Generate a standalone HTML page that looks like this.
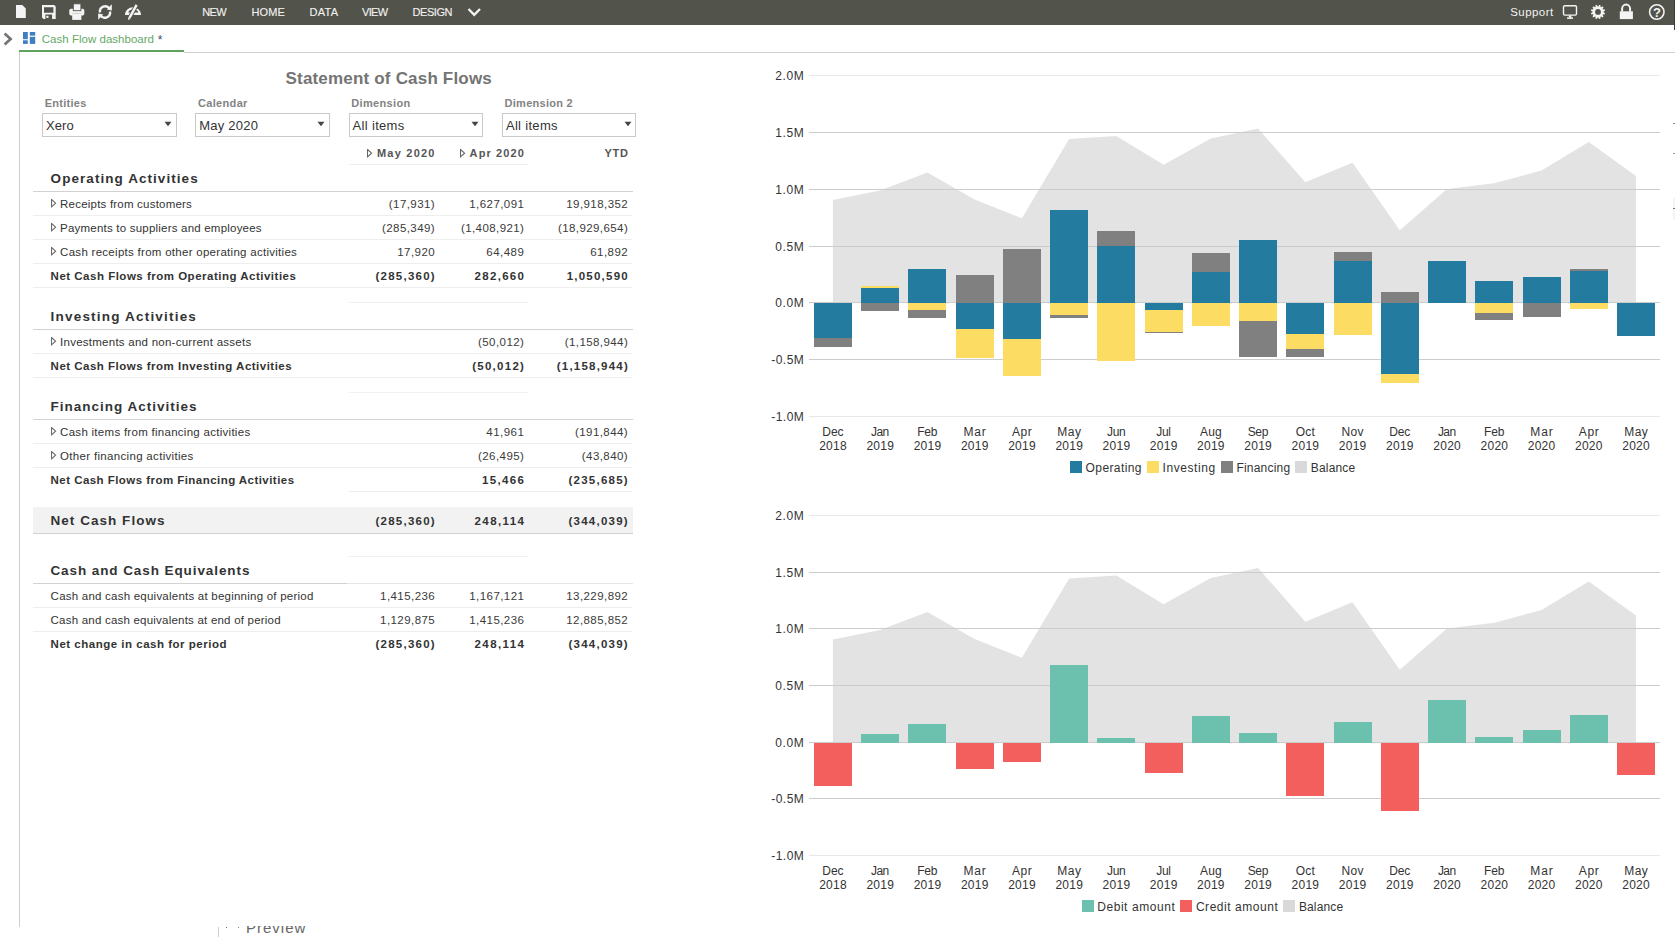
<!DOCTYPE html>
<html><head><meta charset="utf-8"><title>Cash Flow dashboard</title>
<style>
html,body{margin:0;padding:0;background:#fff;}
body{width:1675px;height:937px;overflow:hidden;position:relative;font-family:"Liberation Sans",sans-serif;}
.t{position:absolute;white-space:nowrap;line-height:1;font-family:"Liberation Sans",sans-serif;}
.r{position:absolute;box-sizing:border-box;}
.abs{position:absolute;}
</style></head><body>
<div class="r" style="left:0px;top:0px;width:1675px;height:25px;background:#52534a;"></div>
<svg class="abs" style="left:0;top:0" width="1675" height="25" viewBox="0 0 1675 25">
<path d="M16 5 H22.3 L25.8 8.5 V18 H16 Z" fill="#f4f4f4"/>
<path d="M42 5 H54.2 L55.7 6.5 V19 H43.5 L42 17.5 Z M44 7.2 V12.7 H53.4 V7.2 Z M45.4 14.6 V19 H52.1 V14.6 Z" fill="#f4f4f4" fill-rule="evenodd"/>
<rect x="46.3" y="15.8" width="2.2" height="2.1" fill="#f4f4f4"/>
<path d="M71 8.7 H82.6 Q84.3 8.7 84.3 10.4 V13.8 Q84.3 15.5 82.6 15.5 H71 Q69.3 15.5 69.3 13.8 V10.4 Q69.3 8.7 71 8.7 Z" fill="#f4f4f4"/>
<rect x="73.3" y="3.8" width="7.6" height="6.9" fill="#f4f4f4" stroke="#52534a" stroke-width="0.9"/>
<rect x="72.2" y="13.2" width="9.2" height="6.7" fill="#f4f4f4"/>
<rect x="72.2" y="13.0" width="9.2" height="0.7" fill="#c4c4be"/>
<g fill="none" stroke="#f4f4f4" stroke-width="2.4">
<path d="M100 12.5 A5.3 5.3 0 0 1 109.6 8.6"/>
<path d="M110 11.5 A5.3 5.3 0 0 1 100.4 15.4"/>
</g>
<path d="M106.8 9.6 L111.8 4.2 L111.8 10.6 Z" fill="#f4f4f4"/>
<path d="M103.2 14.4 L98.2 19.8 L98.2 13.4 Z" fill="#f4f4f4"/>
<path d="M124.9 15 A8.1 7.8 0 0 1 141.1 15 Z M128.2 12.6 A5.2 3.9 0 0 1 138.4 12.6 Z" fill="#f4f4f4" fill-rule="evenodd"/>
<path d="M136.8 4.6 L128.6 19.6" stroke="#52534a" stroke-width="4.2"/>
<path d="M136.6 4.9 L129.4 18" stroke="#f4f4f4" stroke-width="2.5"/>
<path d="M127.9 17.6 L130.6 18.9 L128.3 19.9 Z" fill="#f4f4f4"/>
<path d="M468.5 9 L474.2 14.8 L480 9" fill="none" stroke="#f4f4f4" stroke-width="2.3"/>
<rect x="1563.5" y="5.7" width="13" height="9.4" rx="1.3" fill="none" stroke="#f4f4f4" stroke-width="1.4"/>
<rect x="1568.8" y="15.5" width="2.6" height="2.3" fill="#f4f4f4"/>
<rect x="1567" y="17.4" width="6" height="1.5" fill="#f4f4f4"/>
<path d="M1598.34,6.41 L1599.05,4.88 L1600.60,5.29 L1600.45,6.98 L1601.04,7.31 L1602.42,6.34 L1603.56,7.48 L1602.59,8.86 L1602.92,9.45 L1604.61,9.30 L1605.02,10.85 L1603.49,11.56 L1603.49,12.24 L1605.02,12.95 L1604.61,14.50 L1602.92,14.35 L1602.59,14.94 L1603.56,16.32 L1602.42,17.46 L1601.04,16.49 L1600.45,16.82 L1600.60,18.51 L1599.05,18.92 L1598.34,17.39 L1597.66,17.39 L1596.95,18.92 L1595.40,18.51 L1595.55,16.82 L1594.96,16.49 L1593.58,17.46 L1592.44,16.32 L1593.41,14.94 L1593.08,14.35 L1591.39,14.50 L1590.98,12.95 L1592.51,12.24 L1592.51,11.56 L1590.98,10.85 L1591.39,9.30 L1593.08,9.45 L1593.41,8.86 L1592.44,7.48 L1593.58,6.34 L1594.96,7.31 L1595.55,6.98 L1595.40,5.29 L1596.95,4.88 L1597.66,6.41 Z M1600.9,11.9 A2.9,2.9 0 1 0 1595.1,11.9 A2.9,2.9 0 1 0 1600.9,11.9 Z" fill="#f4f4f4" fill-rule="evenodd"/>
<path d="M1622.1 11.5 V8.9 A4 4.3 0 0 1 1630.1 8.9 V11.5" fill="none" stroke="#f4f4f4" stroke-width="2"/>
<rect x="1619.8" y="11.3" width="13.1" height="7.8" fill="#f4f4f4"/>
<circle cx="1656.8" cy="12" r="7.2" fill="none" stroke="#f4f4f4" stroke-width="1.6"/>
</svg>
<div class="r" style="left:1674px;top:0px;width:1px;height:30px;background:#3c3c37;"></div>
<div class="t" style="left:202.20px;top:6.79px;font-size:11px;color:#f2f2f2;letter-spacing:-0.575px;-webkit-text-stroke:0.12px #f2f2f2;">NEW</div>
<div class="t" style="left:251.40px;top:6.79px;font-size:11px;color:#f2f2f2;letter-spacing:0.167px;-webkit-text-stroke:0.12px #f2f2f2;">HOME</div>
<div class="t" style="left:309.50px;top:6.79px;font-size:11px;color:#f2f2f2;letter-spacing:0.267px;-webkit-text-stroke:0.12px #f2f2f2;">DATA</div>
<div class="t" style="left:362.00px;top:6.79px;font-size:11px;color:#f2f2f2;letter-spacing:-0.700px;-webkit-text-stroke:0.12px #f2f2f2;">VIEW</div>
<div class="t" style="left:412.60px;top:6.79px;font-size:11px;color:#f2f2f2;letter-spacing:-0.470px;-webkit-text-stroke:0.12px #f2f2f2;">DESIGN</div>
<div class="t" style="left:1510.20px;top:7.47px;font-size:11.5px;color:#f2f2f2;letter-spacing:0.450px;">Support</div>
<div class="t" style="left:1652.93px;top:6.00px;font-size:13px;font-weight:bold;color:#f4f4f4;letter-spacing:0.000px;">?</div>
<svg class="abs" style="left:0;top:25px" width="200" height="30" viewBox="0 25 200 30">
<path d="M4.6 33.6 L10.6 39 L4.6 44.4" fill="none" stroke="#737373" stroke-width="2.7"/>
<g fill="#3f7ec2">
<rect x="23" y="32" width="4.8" height="7.2"/>
<rect x="23" y="40.3" width="4.8" height="3.6"/>
<rect x="29.8" y="32" width="5.4" height="3.6"/>
<rect x="29.8" y="36.8" width="5.4" height="7.1"/>
</g>
</svg>
<div class="t" style="left:41.80px;top:33.57px;font-size:11.5px;color:#66a866;letter-spacing:0.019px;">Cash Flow dashboard</div>
<div class="t" style="left:157.80px;top:33.74px;font-size:12px;color:#3a4a6a;letter-spacing:0.000px;">*</div>
<div class="r" style="left:19px;top:50px;width:165px;height:2px;background:#5ea35e;"></div>
<div class="r" style="left:184px;top:52px;width:1491px;height:1px;background:#cfcfcf;"></div>
<div class="r" style="left:19px;top:52px;width:1px;height:875px;background:#cdcdcd;"></div>
<div class="t" style="left:285.50px;top:70.21px;font-size:17px;font-weight:bold;color:#747474;letter-spacing:0.189px;">Statement of Cash Flows</div>
<div class="t" style="left:44.70px;top:97.59px;font-size:11px;font-weight:bold;color:#838383;letter-spacing:0.264px;">Entities</div>
<div class="r" style="left:42.0px;top:113px;width:134.5px;height:23.5px;border:1px solid #c9c9c9;background:#fff"></div>
<div class="t" style="left:46.00px;top:118.90px;font-size:13px;color:#333;letter-spacing:0.083px;">Xero</div>
<svg class="abs" style="left:163.9px;top:121px" width="8" height="6"><path d="M0.5 0.8 H7.5 L4 5.3 Z" fill="#444"/></svg>
<div class="t" style="left:198.00px;top:97.59px;font-size:11px;font-weight:bold;color:#838383;letter-spacing:0.329px;">Calendar</div>
<div class="r" style="left:195.3px;top:113px;width:134.5px;height:23.5px;border:1px solid #c9c9c9;background:#fff"></div>
<div class="t" style="left:199.30px;top:118.90px;font-size:13px;color:#333;letter-spacing:0.221px;">May 2020</div>
<svg class="abs" style="left:317.2px;top:121px" width="8" height="6"><path d="M0.5 0.8 H7.5 L4 5.3 Z" fill="#444"/></svg>
<div class="t" style="left:351.30px;top:97.59px;font-size:11px;font-weight:bold;color:#838383;letter-spacing:0.331px;">Dimension</div>
<div class="r" style="left:348.6px;top:113px;width:134.5px;height:23.5px;border:1px solid #c9c9c9;background:#fff"></div>
<div class="t" style="left:352.60px;top:118.90px;font-size:13px;color:#333;letter-spacing:0.319px;">All items</div>
<svg class="abs" style="left:470.5px;top:121px" width="8" height="6"><path d="M0.5 0.8 H7.5 L4 5.3 Z" fill="#444"/></svg>
<div class="t" style="left:504.60px;top:97.59px;font-size:11px;font-weight:bold;color:#838383;letter-spacing:0.265px;">Dimension 2</div>
<div class="r" style="left:501.9px;top:113px;width:134.5px;height:23.5px;border:1px solid #c9c9c9;background:#fff"></div>
<div class="t" style="left:505.90px;top:118.90px;font-size:13px;color:#333;letter-spacing:0.319px;">All items</div>
<svg class="abs" style="left:623.8px;top:121px" width="8" height="6"><path d="M0.5 0.8 H7.5 L4 5.3 Z" fill="#444"/></svg>
<svg class="abs" style="left:367.2px;top:148.6px" width="6" height="10"><path d="M0.5 0.5 L4.6 4.2 L0.5 7.9 Z" fill="none" stroke="#666" stroke-width="1.1"/></svg>
<div class="t" style="left:376.90px;top:148.19px;font-size:11px;font-weight:bold;color:#555;letter-spacing:1.236px;">May 2020</div>
<svg class="abs" style="left:459.7px;top:148.6px" width="6" height="10"><path d="M0.5 0.5 L4.6 4.2 L0.5 7.9 Z" fill="none" stroke="#666" stroke-width="1.1"/></svg>
<div class="t" style="left:469.60px;top:148.19px;font-size:11px;font-weight:bold;color:#555;letter-spacing:1.107px;">Apr 2020</div>
<div class="t" style="left:604.50px;top:148.19px;font-size:11px;font-weight:bold;color:#555;letter-spacing:0.700px;">YTD</div>
<div class="r" style="left:349px;top:164px;width:179px;height:1px;background:#efefef;"></div>
<div class="t" style="left:50.60px;top:172.37px;font-size:13.5px;font-weight:bold;color:#333;letter-spacing:1.055px;">Operating Activities</div>
<div class="r" style="left:33px;top:191px;width:600px;height:1px;background:#d2d2d2;"></div>
<svg class="abs" style="left:51.2px;top:199.2px" width="6" height="10"><path d="M0.5 0.5 L4.6 4.2 L0.5 7.9 Z" fill="none" stroke="#6a6a6a" stroke-width="1.1"/></svg>
<div class="t" style="left:60.10px;top:199.27px;font-size:11.5px;color:#333;letter-spacing:0.207px;">Receipts from customers</div>
<div class="t" style="left:388.83px;top:199.27px;font-size:11.5px;color:#3a3a3a;letter-spacing:0.432px;">(17,931)</div>
<div class="t" style="left:469.30px;top:199.27px;font-size:11.5px;color:#3a3a3a;letter-spacing:0.431px;">1,627,091</div>
<div class="t" style="left:566.28px;top:199.27px;font-size:11.5px;color:#3a3a3a;letter-spacing:0.431px;">19,918,352</div>
<div class="r" style="left:33px;top:215px;width:599px;height:1px;background:#eeeeee;"></div>
<svg class="abs" style="left:51.2px;top:223.2px" width="6" height="10"><path d="M0.5 0.5 L4.6 4.2 L0.5 7.9 Z" fill="none" stroke="#6a6a6a" stroke-width="1.1"/></svg>
<div class="t" style="left:60.10px;top:223.27px;font-size:11.5px;color:#333;letter-spacing:0.210px;">Payments to suppliers and employees</div>
<div class="t" style="left:382.00px;top:223.27px;font-size:11.5px;color:#3a3a3a;letter-spacing:0.431px;">(285,349)</div>
<div class="t" style="left:460.96px;top:223.27px;font-size:11.5px;color:#3a3a3a;letter-spacing:0.414px;">(1,408,921)</div>
<div class="t" style="left:557.94px;top:223.27px;font-size:11.5px;color:#3a3a3a;letter-spacing:0.415px;">(18,929,654)</div>
<div class="r" style="left:33px;top:239px;width:599px;height:1px;background:#eeeeee;"></div>
<svg class="abs" style="left:51.2px;top:247.2px" width="6" height="10"><path d="M0.5 0.5 L4.6 4.2 L0.5 7.9 Z" fill="none" stroke="#6a6a6a" stroke-width="1.1"/></svg>
<div class="t" style="left:60.10px;top:247.27px;font-size:11.5px;color:#333;letter-spacing:0.282px;">Cash receipts from other operating activities</div>
<div class="t" style="left:397.16px;top:247.27px;font-size:11.5px;color:#3a3a3a;letter-spacing:0.467px;">17,920</div>
<div class="t" style="left:486.36px;top:247.27px;font-size:11.5px;color:#3a3a3a;letter-spacing:0.467px;">64,489</div>
<div class="t" style="left:590.16px;top:247.27px;font-size:11.5px;color:#3a3a3a;letter-spacing:0.467px;">61,892</div>
<div class="r" style="left:33px;top:263px;width:599px;height:1px;background:#eeeeee;"></div>
<div class="t" style="left:50.60px;top:271.27px;font-size:11.5px;font-weight:bold;color:#333;letter-spacing:0.500px;">Net Cash Flows from Operating Activities</div>
<div class="t" style="left:375.45px;top:271.27px;font-size:11.5px;font-weight:bold;color:#333;letter-spacing:1.250px;">(285,360)</div>
<div class="t" style="left:474.55px;top:271.27px;font-size:11.5px;font-weight:bold;color:#333;letter-spacing:1.300px;">282,660</div>
<div class="t" style="left:566.68px;top:271.27px;font-size:11.5px;font-weight:bold;color:#333;letter-spacing:1.234px;">1,050,590</div>
<div class="r" style="left:33px;top:287px;width:599px;height:1px;background:#eeeeee;"></div>
<div class="r" style="left:349px;top:302px;width:179px;height:1px;background:#f1f1f1;"></div>
<div class="t" style="left:50.60px;top:310.47px;font-size:13.5px;font-weight:bold;color:#333;letter-spacing:1.197px;">Investing Activities</div>
<div class="r" style="left:33px;top:329px;width:600px;height:1px;background:#d2d2d2;"></div>
<svg class="abs" style="left:51.2px;top:337.2px" width="6" height="10"><path d="M0.5 0.5 L4.6 4.2 L0.5 7.9 Z" fill="none" stroke="#6a6a6a" stroke-width="1.1"/></svg>
<div class="t" style="left:60.10px;top:337.27px;font-size:11.5px;color:#333;letter-spacing:0.249px;">Investments and non-current assets</div>
<div class="t" style="left:478.03px;top:337.27px;font-size:11.5px;color:#3a3a3a;letter-spacing:0.432px;">(50,012)</div>
<div class="t" style="left:564.76px;top:337.27px;font-size:11.5px;color:#3a3a3a;letter-spacing:0.414px;">(1,158,944)</div>
<div class="r" style="left:33px;top:353px;width:599px;height:1px;background:#eeeeee;"></div>
<div class="t" style="left:50.60px;top:361.27px;font-size:11.5px;font-weight:bold;color:#333;letter-spacing:0.489px;">Net Cash Flows from Investing Activities</div>
<div class="t" style="left:472.19px;top:361.27px;font-size:11.5px;font-weight:bold;color:#333;letter-spacing:1.266px;">(50,012)</div>
<div class="t" style="left:556.78px;top:361.27px;font-size:11.5px;font-weight:bold;color:#333;letter-spacing:1.212px;">(1,158,944)</div>
<div class="r" style="left:33px;top:377px;width:599px;height:1px;background:#eeeeee;"></div>
<div class="r" style="left:349px;top:392px;width:179px;height:1px;background:#f1f1f1;"></div>
<div class="t" style="left:50.60px;top:400.47px;font-size:13.5px;font-weight:bold;color:#333;letter-spacing:1.000px;">Financing Activities</div>
<div class="r" style="left:33px;top:419px;width:600px;height:1px;background:#d2d2d2;"></div>
<svg class="abs" style="left:51.2px;top:427.2px" width="6" height="10"><path d="M0.5 0.5 L4.6 4.2 L0.5 7.9 Z" fill="none" stroke="#6a6a6a" stroke-width="1.1"/></svg>
<div class="t" style="left:60.10px;top:427.27px;font-size:11.5px;color:#333;letter-spacing:0.280px;">Cash items from financing activities</div>
<div class="t" style="left:486.36px;top:427.27px;font-size:11.5px;color:#3a3a3a;letter-spacing:0.467px;">41,961</div>
<div class="t" style="left:575.00px;top:427.27px;font-size:11.5px;color:#3a3a3a;letter-spacing:0.431px;">(191,844)</div>
<div class="r" style="left:33px;top:443px;width:599px;height:1px;background:#eeeeee;"></div>
<svg class="abs" style="left:51.2px;top:451.2px" width="6" height="10"><path d="M0.5 0.5 L4.6 4.2 L0.5 7.9 Z" fill="none" stroke="#6a6a6a" stroke-width="1.1"/></svg>
<div class="t" style="left:60.10px;top:451.27px;font-size:11.5px;color:#333;letter-spacing:0.317px;">Other financing activities</div>
<div class="t" style="left:478.03px;top:451.27px;font-size:11.5px;color:#3a3a3a;letter-spacing:0.432px;">(26,495)</div>
<div class="t" style="left:581.83px;top:451.27px;font-size:11.5px;color:#3a3a3a;letter-spacing:0.432px;">(43,840)</div>
<div class="r" style="left:33px;top:467px;width:599px;height:1px;background:#eeeeee;"></div>
<div class="t" style="left:50.60px;top:475.27px;font-size:11.5px;font-weight:bold;color:#333;letter-spacing:0.453px;">Net Cash Flows from Financing Activities</div>
<div class="t" style="left:482.09px;top:475.27px;font-size:11.5px;font-weight:bold;color:#333;letter-spacing:1.323px;">15,466</div>
<div class="t" style="left:568.45px;top:475.27px;font-size:11.5px;font-weight:bold;color:#333;letter-spacing:1.250px;">(235,685)</div>
<div class="r" style="left:349px;top:491px;width:283px;height:1px;background:#eeeeee;"></div>
<div class="r" style="left:33px;top:507px;width:600px;height:26px;background:#f2f2f2;"></div>
<div class="r" style="left:33px;top:533px;width:600px;height:1px;background:#d0d0d0;"></div>
<div class="t" style="left:50.50px;top:514.37px;font-size:13.5px;font-weight:bold;color:#333;letter-spacing:1.038px;">Net Cash Flows</div>
<div class="t" style="left:375.45px;top:516.07px;font-size:11.5px;font-weight:bold;color:#333;letter-spacing:1.250px;">(285,360)</div>
<div class="t" style="left:474.55px;top:516.07px;font-size:11.5px;font-weight:bold;color:#333;letter-spacing:1.400px;">248,114</div>
<div class="t" style="left:568.45px;top:516.07px;font-size:11.5px;font-weight:bold;color:#333;letter-spacing:1.250px;">(344,039)</div>
<div class="r" style="left:349px;top:556px;width:179px;height:1px;background:#f1f1f1;"></div>
<div class="t" style="left:50.40px;top:564.27px;font-size:13.5px;font-weight:bold;color:#333;letter-spacing:0.915px;">Cash and Cash Equivalents</div>
<div class="r" style="left:33px;top:583px;width:314px;height:1px;background:#d2d2d2;"></div>
<div class="r" style="left:347px;top:583px;width:286px;height:1px;background:#e6e6e6;"></div>
<div class="t" style="left:50.60px;top:591.07px;font-size:11.5px;color:#333;letter-spacing:0.230px;">Cash and cash equivalents at beginning of period</div>
<div class="t" style="left:380.10px;top:591.07px;font-size:11.5px;color:#3a3a3a;letter-spacing:0.431px;">1,415,236</div>
<div class="t" style="left:469.30px;top:591.07px;font-size:11.5px;color:#3a3a3a;letter-spacing:0.431px;">1,167,121</div>
<div class="t" style="left:566.28px;top:591.07px;font-size:11.5px;color:#3a3a3a;letter-spacing:0.431px;">13,229,892</div>
<div class="r" style="left:33px;top:607px;width:599px;height:1px;background:#eeeeee;"></div>
<div class="t" style="left:50.60px;top:615.07px;font-size:11.5px;color:#333;letter-spacing:0.215px;">Cash and cash equivalents at end of period</div>
<div class="t" style="left:380.10px;top:615.07px;font-size:11.5px;color:#3a3a3a;letter-spacing:0.431px;">1,129,875</div>
<div class="t" style="left:469.30px;top:615.07px;font-size:11.5px;color:#3a3a3a;letter-spacing:0.431px;">1,415,236</div>
<div class="t" style="left:566.28px;top:615.07px;font-size:11.5px;color:#3a3a3a;letter-spacing:0.431px;">12,885,852</div>
<div class="r" style="left:33px;top:631px;width:599px;height:1px;background:#eeeeee;"></div>
<div class="t" style="left:50.60px;top:639.17px;font-size:11.5px;font-weight:bold;color:#333;letter-spacing:0.508px;">Net change in cash for period</div>
<div class="t" style="left:375.45px;top:639.17px;font-size:11.5px;font-weight:bold;color:#333;letter-spacing:1.250px;">(285,360)</div>
<div class="t" style="left:474.55px;top:639.17px;font-size:11.5px;font-weight:bold;color:#333;letter-spacing:1.400px;">248,114</div>
<div class="t" style="left:568.45px;top:639.17px;font-size:11.5px;font-weight:bold;color:#333;letter-spacing:1.250px;">(344,039)</div>
<div class="r" style="left:1673px;top:123px;width:2px;height:1px;background:#888;"></div>
<div class="r" style="left:1673px;top:153px;width:2px;height:1px;background:#999;"></div>
<div class="r" style="left:1673px;top:198px;width:2px;height:22px;background:#f4f4f4;"></div>
<div class="r" style="left:1673px;top:208px;width:2px;height:1px;background:#777;"></div>
<div class="abs" style="left:218px;top:927px;width:1px;height:10px;background:#cfcfcf"></div>
<div class="r" style="left:226px;top:927px;width:1px;height:1px;background:#666;"></div>
<div class="r" style="left:238px;top:927px;width:1px;height:1px;background:#888;"></div>
<div class="abs" style="left:240px;top:926px;width:80px;height:11px;overflow:hidden"><div style="position:absolute;left:6px;top:-6px;font:15px/1 'Liberation Sans';color:#666;letter-spacing:1.0px;white-space:nowrap">Preview</div></div>
<svg class="abs" style="left:0;top:0" width="1675" height="937" viewBox="0 0 1675 937" shape-rendering="crispEdges">
<polygon points="832.9,302.6 832.9,200.1 880.1,190.6 927.4,172.5 974.6,199.6 1021.9,218.2 1069.1,139.1 1116.3,135.9 1163.6,164.8 1210.8,138.4 1258.1,128.6 1305.3,182.2 1352.5,162.8 1399.8,230.2 1447.0,188.9 1494.3,183.3 1541.5,170.5 1588.7,141.9 1636.0,175.9 1636.0,302.6" fill="#e3e3e3" shape-rendering="geometricPrecision"/>
<rect x="809" y="75" width="851" height="1" fill="#e8e8e8"/>
<rect x="809" y="132" width="851" height="1" fill="#cccccc"/>
<rect x="809" y="189" width="851" height="1" fill="#cccccc"/>
<rect x="809" y="246" width="851" height="1" fill="#cccccc"/>
<rect x="809" y="302" width="851" height="1" fill="#cccccc"/>
<rect x="809" y="359" width="851" height="1" fill="#cccccc"/>
<rect x="809" y="416" width="851" height="1" fill="#e8e8e8"/>
<rect x="813.9" y="302.6" width="38.0" height="35.1" fill="#237b9f"/>
<rect x="813.9" y="337.7" width="38.0" height="8.9" fill="#808080"/>
<rect x="861.1" y="287.7" width="38.0" height="14.9" fill="#237b9f"/>
<rect x="861.1" y="286.4" width="38.0" height="1.3" fill="#fddc64"/>
<rect x="861.1" y="302.6" width="38.0" height="8.2" fill="#808080"/>
<rect x="908.4" y="268.7" width="38.0" height="33.9" fill="#237b9f"/>
<rect x="908.4" y="302.6" width="38.0" height="7.4" fill="#fddc64"/>
<rect x="908.4" y="310.0" width="38.0" height="7.6" fill="#808080"/>
<rect x="955.6" y="274.9" width="38.0" height="27.7" fill="#808080"/>
<rect x="955.6" y="302.6" width="38.0" height="26.3" fill="#237b9f"/>
<rect x="955.6" y="328.9" width="38.0" height="29.1" fill="#fddc64"/>
<rect x="1002.9" y="249.1" width="38.0" height="53.5" fill="#808080"/>
<rect x="1002.9" y="302.6" width="38.0" height="36.2" fill="#237b9f"/>
<rect x="1002.9" y="338.8" width="38.0" height="36.9" fill="#fddc64"/>
<rect x="1050.1" y="209.9" width="38.0" height="92.7" fill="#237b9f"/>
<rect x="1050.1" y="302.6" width="38.0" height="12.3" fill="#fddc64"/>
<rect x="1050.1" y="314.9" width="38.0" height="2.7" fill="#808080"/>
<rect x="1097.3" y="231.0" width="38.0" height="15.1" fill="#808080"/>
<rect x="1097.3" y="246.1" width="38.0" height="56.5" fill="#237b9f"/>
<rect x="1097.3" y="302.6" width="38.0" height="58.2" fill="#fddc64"/>
<rect x="1144.6" y="302.6" width="38.0" height="7.4" fill="#237b9f"/>
<rect x="1144.6" y="310.0" width="38.0" height="21.9" fill="#fddc64"/>
<rect x="1144.6" y="331.9" width="38.0" height="0.7" fill="#808080"/>
<rect x="1191.8" y="253.0" width="38.0" height="18.8" fill="#808080"/>
<rect x="1191.8" y="271.8" width="38.0" height="30.8" fill="#237b9f"/>
<rect x="1191.8" y="302.6" width="38.0" height="22.9" fill="#fddc64"/>
<rect x="1239.1" y="240.0" width="38.0" height="62.6" fill="#237b9f"/>
<rect x="1239.1" y="302.6" width="38.0" height="18.2" fill="#fddc64"/>
<rect x="1239.1" y="320.8" width="38.0" height="35.7" fill="#808080"/>
<rect x="1286.3" y="302.6" width="38.0" height="31.0" fill="#237b9f"/>
<rect x="1286.3" y="333.6" width="38.0" height="15.4" fill="#fddc64"/>
<rect x="1286.3" y="349.0" width="38.0" height="7.7" fill="#808080"/>
<rect x="1333.5" y="251.9" width="38.0" height="9.2" fill="#808080"/>
<rect x="1333.5" y="261.1" width="38.0" height="41.5" fill="#237b9f"/>
<rect x="1333.5" y="302.6" width="38.0" height="32.1" fill="#fddc64"/>
<rect x="1380.8" y="292.0" width="38.0" height="10.6" fill="#808080"/>
<rect x="1380.8" y="302.6" width="38.0" height="71.4" fill="#237b9f"/>
<rect x="1380.8" y="374.0" width="38.0" height="8.7" fill="#fddc64"/>
<rect x="1428.0" y="260.9" width="38.0" height="41.7" fill="#237b9f"/>
<rect x="1475.3" y="280.9" width="38.0" height="21.7" fill="#237b9f"/>
<rect x="1475.3" y="302.6" width="38.0" height="10.6" fill="#fddc64"/>
<rect x="1475.3" y="313.2" width="38.0" height="6.4" fill="#808080"/>
<rect x="1522.5" y="276.9" width="38.0" height="25.7" fill="#237b9f"/>
<rect x="1522.5" y="302.6" width="38.0" height="14.2" fill="#808080"/>
<rect x="1569.7" y="269.2" width="38.0" height="1.8" fill="#808080"/>
<rect x="1569.7" y="271.0" width="38.0" height="31.6" fill="#237b9f"/>
<rect x="1569.7" y="302.6" width="38.0" height="6.2" fill="#fddc64"/>
<rect x="1617.0" y="302.6" width="38.0" height="33.1" fill="#237b9f"/>
<polygon points="832.9,742.1 832.9,639.6 880.1,630.1 927.4,612.0 974.6,639.1 1021.9,657.7 1069.1,578.6 1116.3,575.4 1163.6,604.3 1210.8,577.9 1258.1,568.1 1305.3,621.7 1352.5,602.3 1399.8,669.7 1447.0,628.4 1494.3,622.8 1541.5,610.0 1588.7,581.4 1636.0,615.4 1636.0,742.1" fill="#e3e3e3" shape-rendering="geometricPrecision"/>
<rect x="809" y="515" width="851" height="1" fill="#e8e8e8"/>
<rect x="809" y="572" width="851" height="1" fill="#cccccc"/>
<rect x="809" y="628" width="851" height="1" fill="#cccccc"/>
<rect x="809" y="685" width="851" height="1" fill="#cccccc"/>
<rect x="809" y="742" width="851" height="1" fill="#cccccc"/>
<rect x="809" y="798" width="851" height="1" fill="#cccccc"/>
<rect x="809" y="855" width="851" height="1" fill="#e8e8e8"/>
<rect x="813.9" y="742.6" width="38.0" height="43.1" fill="#f25f5c"/>
<rect x="861.1" y="734.0" width="38.0" height="8.6" fill="#6cc0ae"/>
<rect x="908.4" y="724.0" width="38.0" height="18.6" fill="#6cc0ae"/>
<rect x="955.6" y="742.6" width="38.0" height="26.2" fill="#f25f5c"/>
<rect x="1002.9" y="742.6" width="38.0" height="19.2" fill="#f25f5c"/>
<rect x="1050.1" y="664.8" width="38.0" height="77.8" fill="#6cc0ae"/>
<rect x="1097.3" y="737.8" width="38.0" height="4.8" fill="#6cc0ae"/>
<rect x="1144.6" y="742.6" width="38.0" height="30.0" fill="#f25f5c"/>
<rect x="1191.8" y="715.9" width="38.0" height="26.7" fill="#6cc0ae"/>
<rect x="1239.1" y="733.0" width="38.0" height="9.6" fill="#6cc0ae"/>
<rect x="1286.3" y="742.6" width="38.0" height="53.1" fill="#f25f5c"/>
<rect x="1333.5" y="722.0" width="38.0" height="20.6" fill="#6cc0ae"/>
<rect x="1380.8" y="742.6" width="38.0" height="68.0" fill="#f25f5c"/>
<rect x="1428.0" y="700.0" width="38.0" height="42.6" fill="#6cc0ae"/>
<rect x="1475.3" y="737.0" width="38.0" height="5.6" fill="#6cc0ae"/>
<rect x="1522.5" y="729.9" width="38.0" height="12.7" fill="#6cc0ae"/>
<rect x="1569.7" y="714.9" width="38.0" height="27.7" fill="#6cc0ae"/>
<rect x="1617.0" y="742.6" width="38.0" height="31.9" fill="#f25f5c"/>
<rect x="1070" y="461" width="12" height="12" fill="#237b9f"/>
<rect x="1147" y="461" width="12" height="12" fill="#fddc64"/>
<rect x="1221" y="461" width="12" height="12" fill="#808080"/>
<rect x="1295" y="461" width="12" height="12" fill="#d9d9d9"/>
<rect x="1082" y="900" width="12" height="12" fill="#6cc0ae"/>
<rect x="1180" y="900" width="12" height="12" fill="#f25f5c"/>
<rect x="1283" y="900" width="12" height="12" fill="#d9d9d9"/>
</svg>
<div class="t" style="left:775.22px;top:69.74px;font-size:12px;color:#333;letter-spacing:0.628px;">2.0M</div>
<div class="t" style="left:775.22px;top:126.74px;font-size:12px;color:#333;letter-spacing:0.628px;">1.5M</div>
<div class="t" style="left:775.22px;top:183.74px;font-size:12px;color:#333;letter-spacing:0.628px;">1.0M</div>
<div class="t" style="left:775.22px;top:240.74px;font-size:12px;color:#333;letter-spacing:0.628px;">0.5M</div>
<div class="t" style="left:775.22px;top:296.74px;font-size:12px;color:#333;letter-spacing:0.628px;">0.0M</div>
<div class="t" style="left:771.25px;top:354.34px;font-size:12px;color:#333;letter-spacing:0.462px;">-0.5M</div>
<div class="t" style="left:771.25px;top:411.34px;font-size:12px;color:#333;letter-spacing:0.462px;">-1.0M</div>
<div class="t" style="left:822.30px;top:425.64px;font-size:12px;color:#333;letter-spacing:-0.075px;">Dec</div>
<div class="t" style="left:819.17px;top:439.64px;font-size:12px;color:#333;letter-spacing:0.250px;">2018</div>
<div class="t" style="left:871.04px;top:425.64px;font-size:12px;color:#333;letter-spacing:-0.575px;">Jan</div>
<div class="t" style="left:866.41px;top:439.64px;font-size:12px;color:#333;letter-spacing:0.250px;">2019</div>
<div class="t" style="left:917.23px;top:425.64px;font-size:12px;color:#333;letter-spacing:-0.200px;">Feb</div>
<div class="t" style="left:913.65px;top:439.64px;font-size:12px;color:#333;letter-spacing:0.250px;">2019</div>
<div class="t" style="left:963.42px;top:425.64px;font-size:12px;color:#333;letter-spacing:0.875px;">Mar</div>
<div class="t" style="left:960.89px;top:439.64px;font-size:12px;color:#333;letter-spacing:0.250px;">2019</div>
<div class="t" style="left:1011.94px;top:425.64px;font-size:12px;color:#333;letter-spacing:0.600px;">Apr</div>
<div class="t" style="left:1008.13px;top:439.64px;font-size:12px;color:#333;letter-spacing:0.250px;">2019</div>
<div class="t" style="left:1057.32px;top:425.64px;font-size:12px;color:#333;letter-spacing:0.450px;">May</div>
<div class="t" style="left:1055.38px;top:439.64px;font-size:12px;color:#333;letter-spacing:0.250px;">2019</div>
<div class="t" style="left:1106.89px;top:425.64px;font-size:12px;color:#333;letter-spacing:-0.225px;">Jun</div>
<div class="t" style="left:1102.62px;top:439.64px;font-size:12px;color:#333;letter-spacing:0.250px;">2019</div>
<div class="t" style="left:1156.30px;top:425.64px;font-size:12px;color:#333;letter-spacing:-0.400px;">Jul</div>
<div class="t" style="left:1149.86px;top:439.64px;font-size:12px;color:#333;letter-spacing:0.250px;">2019</div>
<div class="t" style="left:1200.04px;top:425.64px;font-size:12px;color:#333;letter-spacing:0.100px;">Aug</div>
<div class="t" style="left:1197.10px;top:439.64px;font-size:12px;color:#333;letter-spacing:0.250px;">2019</div>
<div class="t" style="left:1247.73px;top:425.64px;font-size:12px;color:#333;letter-spacing:-0.350px;">Sep</div>
<div class="t" style="left:1244.34px;top:439.64px;font-size:12px;color:#333;letter-spacing:0.250px;">2019</div>
<div class="t" style="left:1295.65px;top:425.64px;font-size:12px;color:#333;letter-spacing:0.325px;">Oct</div>
<div class="t" style="left:1291.58px;top:439.64px;font-size:12px;color:#333;letter-spacing:0.250px;">2019</div>
<div class="t" style="left:1341.49px;top:425.64px;font-size:12px;color:#333;letter-spacing:0.375px;">Nov</div>
<div class="t" style="left:1338.82px;top:439.64px;font-size:12px;color:#333;letter-spacing:0.250px;">2019</div>
<div class="t" style="left:1389.18px;top:425.64px;font-size:12px;color:#333;letter-spacing:-0.075px;">Dec</div>
<div class="t" style="left:1386.06px;top:439.64px;font-size:12px;color:#333;letter-spacing:0.250px;">2019</div>
<div class="t" style="left:1437.92px;top:425.64px;font-size:12px;color:#333;letter-spacing:-0.575px;">Jan</div>
<div class="t" style="left:1433.30px;top:439.64px;font-size:12px;color:#333;letter-spacing:0.250px;">2020</div>
<div class="t" style="left:1484.11px;top:425.64px;font-size:12px;color:#333;letter-spacing:-0.200px;">Feb</div>
<div class="t" style="left:1480.54px;top:439.64px;font-size:12px;color:#333;letter-spacing:0.250px;">2020</div>
<div class="t" style="left:1530.30px;top:425.64px;font-size:12px;color:#333;letter-spacing:0.875px;">Mar</div>
<div class="t" style="left:1527.78px;top:439.64px;font-size:12px;color:#333;letter-spacing:0.250px;">2020</div>
<div class="t" style="left:1578.82px;top:425.64px;font-size:12px;color:#333;letter-spacing:0.600px;">Apr</div>
<div class="t" style="left:1575.02px;top:439.64px;font-size:12px;color:#333;letter-spacing:0.250px;">2020</div>
<div class="t" style="left:1624.20px;top:425.64px;font-size:12px;color:#333;letter-spacing:0.450px;">May</div>
<div class="t" style="left:1622.26px;top:439.64px;font-size:12px;color:#333;letter-spacing:0.250px;">2020</div>
<div class="t" style="left:775.22px;top:509.74px;font-size:12px;color:#333;letter-spacing:0.628px;">2.0M</div>
<div class="t" style="left:775.22px;top:566.74px;font-size:12px;color:#333;letter-spacing:0.628px;">1.5M</div>
<div class="t" style="left:775.22px;top:622.74px;font-size:12px;color:#333;letter-spacing:0.628px;">1.0M</div>
<div class="t" style="left:775.22px;top:679.74px;font-size:12px;color:#333;letter-spacing:0.628px;">0.5M</div>
<div class="t" style="left:775.22px;top:736.74px;font-size:12px;color:#333;letter-spacing:0.628px;">0.0M</div>
<div class="t" style="left:771.25px;top:793.34px;font-size:12px;color:#333;letter-spacing:0.462px;">-0.5M</div>
<div class="t" style="left:771.25px;top:850.34px;font-size:12px;color:#333;letter-spacing:0.462px;">-1.0M</div>
<div class="t" style="left:822.30px;top:865.14px;font-size:12px;color:#333;letter-spacing:-0.075px;">Dec</div>
<div class="t" style="left:819.17px;top:879.14px;font-size:12px;color:#333;letter-spacing:0.250px;">2018</div>
<div class="t" style="left:871.04px;top:865.14px;font-size:12px;color:#333;letter-spacing:-0.575px;">Jan</div>
<div class="t" style="left:866.41px;top:879.14px;font-size:12px;color:#333;letter-spacing:0.250px;">2019</div>
<div class="t" style="left:917.23px;top:865.14px;font-size:12px;color:#333;letter-spacing:-0.200px;">Feb</div>
<div class="t" style="left:913.65px;top:879.14px;font-size:12px;color:#333;letter-spacing:0.250px;">2019</div>
<div class="t" style="left:963.42px;top:865.14px;font-size:12px;color:#333;letter-spacing:0.875px;">Mar</div>
<div class="t" style="left:960.89px;top:879.14px;font-size:12px;color:#333;letter-spacing:0.250px;">2019</div>
<div class="t" style="left:1011.94px;top:865.14px;font-size:12px;color:#333;letter-spacing:0.600px;">Apr</div>
<div class="t" style="left:1008.13px;top:879.14px;font-size:12px;color:#333;letter-spacing:0.250px;">2019</div>
<div class="t" style="left:1057.32px;top:865.14px;font-size:12px;color:#333;letter-spacing:0.450px;">May</div>
<div class="t" style="left:1055.38px;top:879.14px;font-size:12px;color:#333;letter-spacing:0.250px;">2019</div>
<div class="t" style="left:1106.89px;top:865.14px;font-size:12px;color:#333;letter-spacing:-0.225px;">Jun</div>
<div class="t" style="left:1102.62px;top:879.14px;font-size:12px;color:#333;letter-spacing:0.250px;">2019</div>
<div class="t" style="left:1156.30px;top:865.14px;font-size:12px;color:#333;letter-spacing:-0.400px;">Jul</div>
<div class="t" style="left:1149.86px;top:879.14px;font-size:12px;color:#333;letter-spacing:0.250px;">2019</div>
<div class="t" style="left:1200.04px;top:865.14px;font-size:12px;color:#333;letter-spacing:0.100px;">Aug</div>
<div class="t" style="left:1197.10px;top:879.14px;font-size:12px;color:#333;letter-spacing:0.250px;">2019</div>
<div class="t" style="left:1247.73px;top:865.14px;font-size:12px;color:#333;letter-spacing:-0.350px;">Sep</div>
<div class="t" style="left:1244.34px;top:879.14px;font-size:12px;color:#333;letter-spacing:0.250px;">2019</div>
<div class="t" style="left:1295.65px;top:865.14px;font-size:12px;color:#333;letter-spacing:0.325px;">Oct</div>
<div class="t" style="left:1291.58px;top:879.14px;font-size:12px;color:#333;letter-spacing:0.250px;">2019</div>
<div class="t" style="left:1341.49px;top:865.14px;font-size:12px;color:#333;letter-spacing:0.375px;">Nov</div>
<div class="t" style="left:1338.82px;top:879.14px;font-size:12px;color:#333;letter-spacing:0.250px;">2019</div>
<div class="t" style="left:1389.18px;top:865.14px;font-size:12px;color:#333;letter-spacing:-0.075px;">Dec</div>
<div class="t" style="left:1386.06px;top:879.14px;font-size:12px;color:#333;letter-spacing:0.250px;">2019</div>
<div class="t" style="left:1437.92px;top:865.14px;font-size:12px;color:#333;letter-spacing:-0.575px;">Jan</div>
<div class="t" style="left:1433.30px;top:879.14px;font-size:12px;color:#333;letter-spacing:0.250px;">2020</div>
<div class="t" style="left:1484.11px;top:865.14px;font-size:12px;color:#333;letter-spacing:-0.200px;">Feb</div>
<div class="t" style="left:1480.54px;top:879.14px;font-size:12px;color:#333;letter-spacing:0.250px;">2020</div>
<div class="t" style="left:1530.30px;top:865.14px;font-size:12px;color:#333;letter-spacing:0.875px;">Mar</div>
<div class="t" style="left:1527.78px;top:879.14px;font-size:12px;color:#333;letter-spacing:0.250px;">2020</div>
<div class="t" style="left:1578.82px;top:865.14px;font-size:12px;color:#333;letter-spacing:0.600px;">Apr</div>
<div class="t" style="left:1575.02px;top:879.14px;font-size:12px;color:#333;letter-spacing:0.250px;">2020</div>
<div class="t" style="left:1624.20px;top:865.14px;font-size:12px;color:#333;letter-spacing:0.450px;">May</div>
<div class="t" style="left:1622.26px;top:879.14px;font-size:12px;color:#333;letter-spacing:0.250px;">2020</div>
<div class="t" style="left:1085.60px;top:461.84px;font-size:12px;color:#333;letter-spacing:0.400px;">Operating</div>
<div class="t" style="left:1162.50px;top:461.84px;font-size:12px;color:#333;letter-spacing:0.569px;">Investing</div>
<div class="t" style="left:1236.40px;top:461.84px;font-size:12px;color:#333;letter-spacing:0.219px;">Financing</div>
<div class="t" style="left:1310.80px;top:461.84px;font-size:12px;color:#333;letter-spacing:0.175px;">Balance</div>
<div class="t" style="left:1097.20px;top:901.04px;font-size:12px;color:#333;letter-spacing:0.564px;">Debit amount</div>
<div class="t" style="left:1195.90px;top:901.04px;font-size:12px;color:#333;letter-spacing:0.546px;">Credit amount</div>
<div class="t" style="left:1298.90px;top:901.04px;font-size:12px;color:#333;letter-spacing:0.142px;">Balance</div>
</body></html>
